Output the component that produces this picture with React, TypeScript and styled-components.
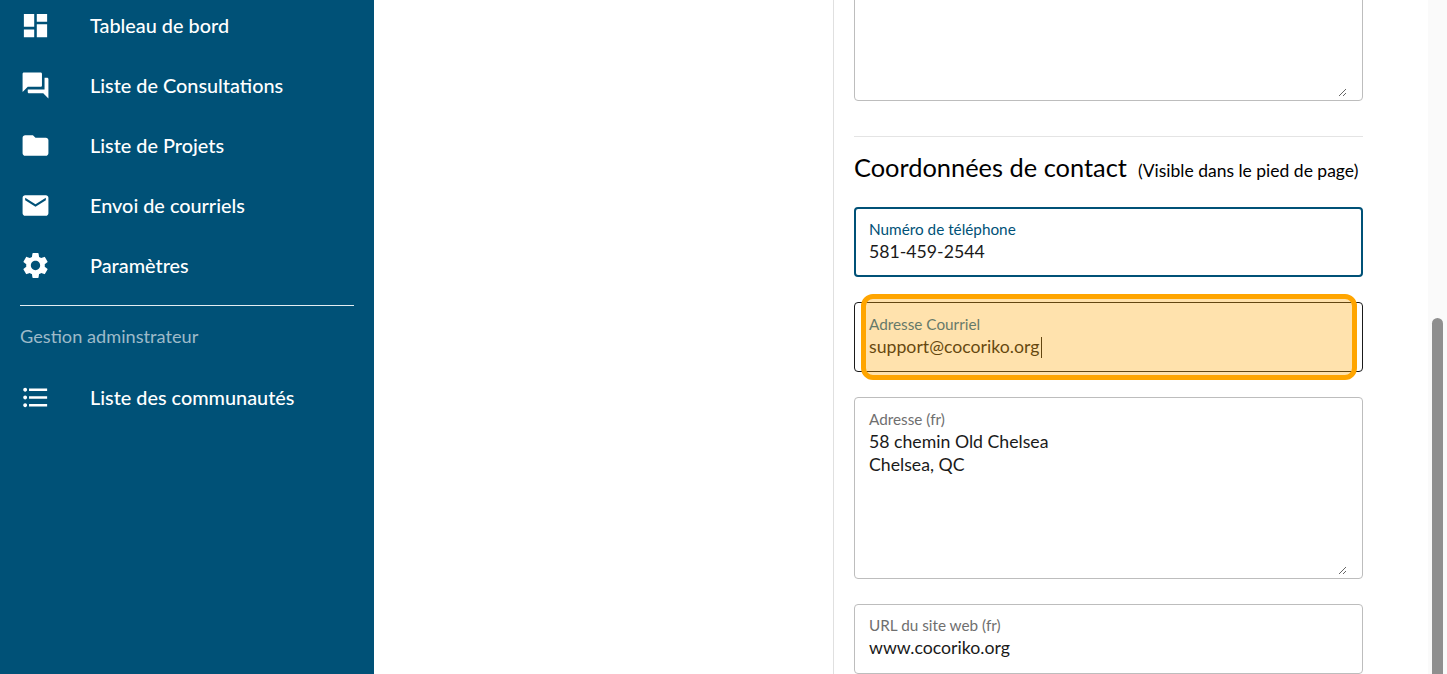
import { createGlobalStyle, styled } from 'styled-components'
import {
  MdDashboard,
  MdEmail,
  MdFolder,
  MdFormatListBulleted,
  MdQuestionAnswer,
  MdSettings,
} from 'react-icons/md'

const GlobalStyle = createGlobalStyle`
  html, body {
    margin: 0;
    height: 100%;
    overflow: hidden;
    background: #fff;
  }
  * {
    box-sizing: border-box;
  }
`

const Page = styled.div`
  display: grid;
  grid-template-columns: 374px 459px 595px 19px;
  height: 674px;
  overflow: hidden;
  font-family: Lato, 'Liberation Sans', sans-serif;
  color: #1a1a1a;
`

const Sidebar = styled.nav`
  background: #005177;
  color: #fff;
  padding: 0 20px;
`

const NavList = styled.div`
  display: flex;
  flex-direction: column;
  margin-top: -5px;
`

const NavItem = styled.a`
  display: flex;
  align-items: center;
  height: 60px;
  gap: 39px;
  font-size: 19.85px;
  font-weight: 500;
  color: #fff;

  svg {
    flex: none;
    width: 31px;
    height: 31px;
  }
`

const NavDivider = styled.hr`
  height: 1px;
  margin: 10px 0 0;
  border: 0;
  background: #e3edf2;
`

const NavCaption = styled.div`
  margin: 19px 0 20px;
  font-size: 18.2px;
  line-height: 22px;
  color: #9dbac9;
`

const LeftColumn = styled.div`
  background: #fff;
`

const FormColumn = styled.main`
  display: flex;
  flex-direction: column;
  border-left: 1px solid #e0e0e0;
  padding: 0 65px 0 20px;
`

const AreaField = styled.div<{ $height: number }>`
  flex: none;
  height: ${(p) => p.$height}px;
  display: flex;
  flex-direction: column;
  padding: 11px 15px 3px 14px;
  border: 1px solid #bdbdbd;
  border-radius: 4px;
`

const TopArea = styled(AreaField)`
  margin-top: -20px;
`

const Divider = styled.hr`
  flex: none;
  height: 1px;
  margin: 35px 0 0;
  border: 0;
  background: #e4e4e4;
`

const SectionTitle = styled.h2`
  display: flex;
  align-items: baseline;
  gap: 11px;
  margin: 16px 0 25px;
  height: 29px;
  font-size: 25.4px;
  line-height: 29px;
  font-weight: 400;
  color: #000;
`

const TitleNote = styled.span`
  font-size: 17.5px;
`

const FieldLabel = styled.label<{ $color: string }>`
  display: block;
  font-size: 15.3px;
  line-height: 18px;
  color: ${(p) => p.$color};
`

const Field = styled.div<{ $tone: 'focus' | 'dark' | 'plain' }>`
  flex: none;
  position: relative;
  height: 70px;
  margin-bottom: 25px;
  padding: ${(p) => (p.$tone === 'focus' ? '11px 13px' : '12px 14px')};
  border-radius: 4px;
  border: ${(p) =>
    p.$tone === 'focus'
      ? '2px solid #005177'
      : p.$tone === 'dark'
        ? '1px solid #1a1a1a'
        : '1px solid #bdbdbd'};
`

const FieldValue = styled.div`
  margin-top: 2px;
  font-size: 17.7px;
  line-height: 23px;
  color: #1a1a1a;
`

const Caret = styled.span`
  display: inline-block;
  width: 1px;
  height: 21px;
  margin-left: 2px;
  vertical-align: -5px;
  background: #1a1a1a;
`

const Highlight = styled.div`
  position: absolute;
  top: -9px;
  bottom: -9px;
  left: 6px;
  right: 5px;
  border: 5px solid #ffa500;
  border-radius: 12px;
  background: rgba(255, 165, 0, 0.32);
  pointer-events: none;
`

const AddressField = styled(AreaField)`
  padding-top: 12px;
`

const AreaInput = styled.textarea`
  flex: 1;
  display: block;
  width: 100%;
  margin: 2px 0 0;
  padding: 0;
  border: 0;
  outline: 0;
  resize: vertical;
  background: transparent;
  font-family: inherit;
  font-size: 17.7px;
  line-height: 23px;
  color: #1a1a1a;
`

const UrlField = styled(Field)`
  margin-top: 25px;
  padding-top: 11px;
`

const ScrollTrack = styled.div`
  padding: 318px 4px 0;
  background: #fafafa;
`

const ScrollThumb = styled.div`
  height: 400px;
  border-radius: 6px 6px 0 0;
  background: #8f8f8f;
`

const navItems = [
  { label: 'Tableau de bord', icon: <MdDashboard /> },
  { label: 'Liste de Consultations', icon: <MdQuestionAnswer /> },
  { label: 'Liste de Projets', icon: <MdFolder /> },
  { label: 'Envoi de courriels', icon: <MdEmail /> },
  { label: 'Paramètres', icon: <MdSettings /> },
]

export default function App() {
  return (
    <Page>
      <GlobalStyle />
      <Sidebar>
        <NavList>
          {navItems.map((item) => (
            <NavItem key={item.label}>
              {item.icon}
              {item.label}
            </NavItem>
          ))}
        </NavList>
        <NavDivider />
        <NavCaption>Gestion adminstrateur</NavCaption>
        <NavItem>
          <MdFormatListBulleted />
          Liste des communautés
        </NavItem>
      </Sidebar>
      <LeftColumn />
      <FormColumn>
        <TopArea $height={121}>
          <AreaInput readOnly defaultValue="" aria-label="Description" />
        </TopArea>
        <Divider />
        <SectionTitle>
          Coordonnées de contact
          <TitleNote>(Visible dans le pied de page)</TitleNote>
        </SectionTitle>
        <Field $tone="focus">
          <FieldLabel $color="#005177">Numéro de téléphone</FieldLabel>
          <FieldValue>581-459-2544</FieldValue>
        </Field>
        <Field $tone="dark">
          <FieldLabel $color="#18669c">Adresse Courriel</FieldLabel>
          <FieldValue>
            support@cocoriko.org
            <Caret />
          </FieldValue>
          <Highlight />
        </Field>
        <AddressField $height={182}>
          <FieldLabel $color="#6f6f6f">Adresse (fr)</FieldLabel>
          <AreaInput readOnly defaultValue={'58 chemin Old Chelsea\nChelsea, QC'} />
        </AddressField>
        <UrlField $tone="plain">
          <FieldLabel $color="#6f6f6f">URL du site web (fr)</FieldLabel>
          <FieldValue>www.cocoriko.org</FieldValue>
        </UrlField>
      </FormColumn>
      <ScrollTrack>
        <ScrollThumb />
      </ScrollTrack>
    </Page>
  )
}
